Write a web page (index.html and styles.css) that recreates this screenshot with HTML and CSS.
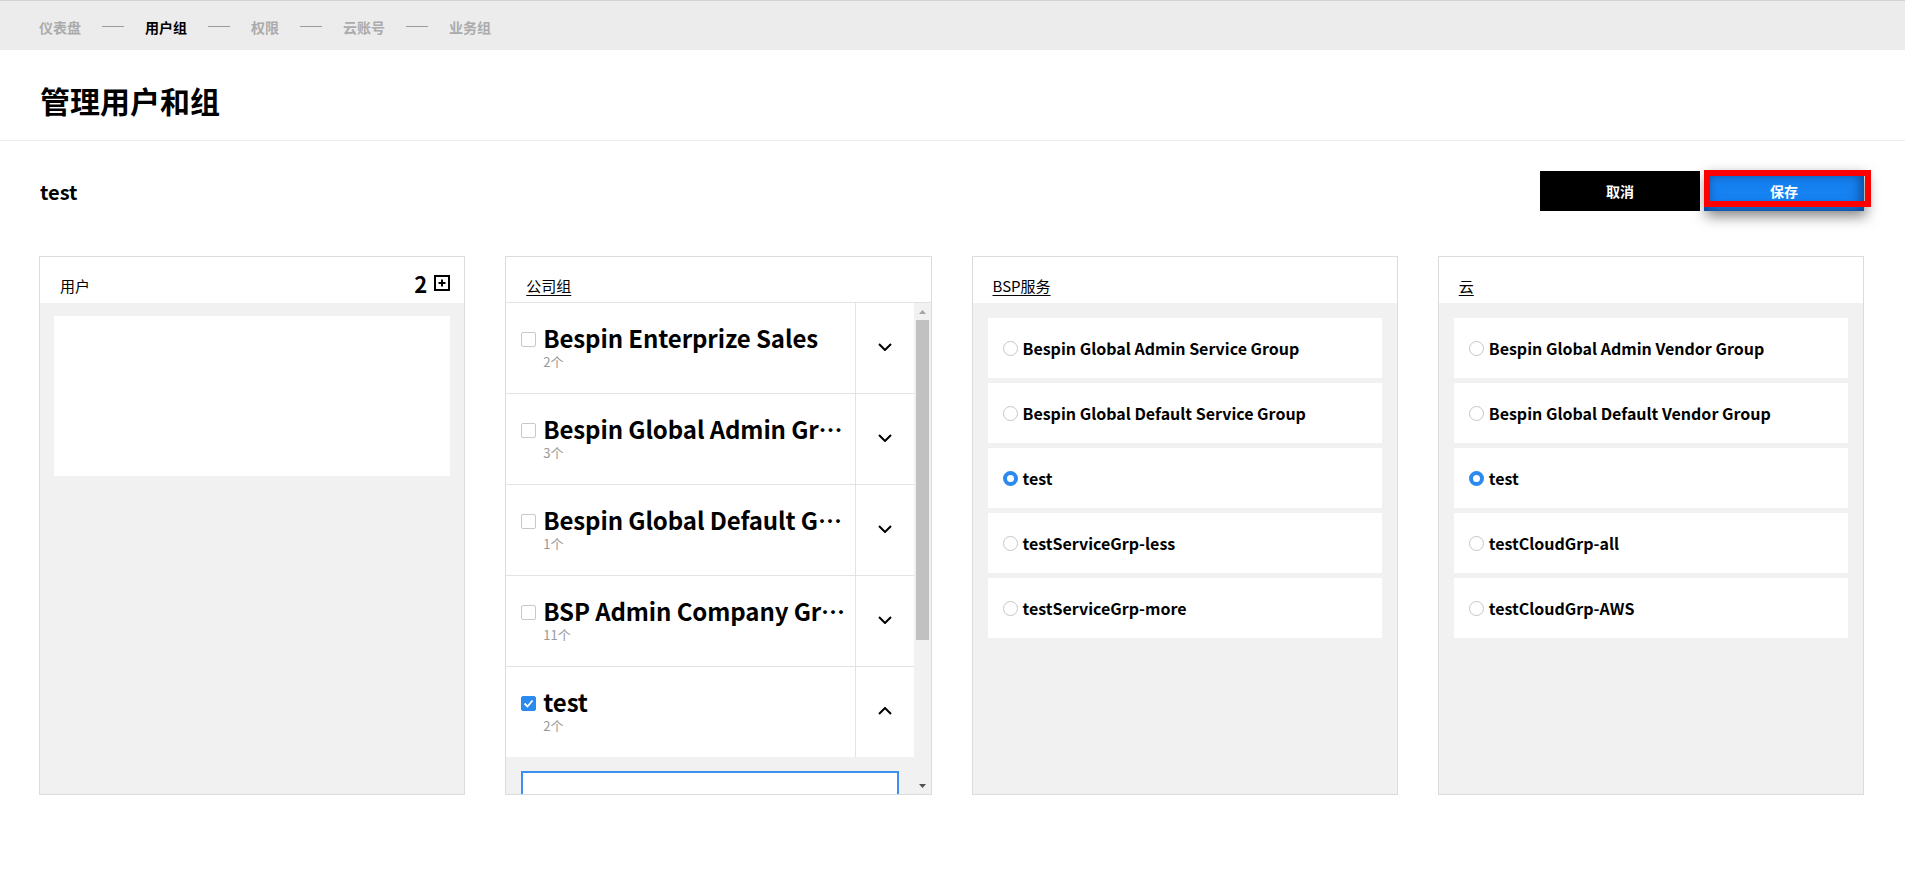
FILE: index.html
```html
<!DOCTYPE html>
<html lang="zh">
<head>
<meta charset="utf-8">
<title>管理用户和组</title>
<link rel="stylesheet" href="styles.css">
</head>
<body>
<nav class="crumbs">
  <span class="crumb">仪表盘</span><span class="sep"></span>
  <span class="crumb active">用户组</span><span class="sep"></span>
  <span class="crumb">权限</span><span class="sep"></span>
  <span class="crumb">云账号</span><span class="sep"></span>
  <span class="crumb">业务组</span>
</nav>
<header class="page-head"><h1>管理用户和组</h1></header>
<main class="main">
  <div class="toolbar">
    <h2 class="name">test</h2>
    <div class="actions">
      <button class="btn btn-cancel">取消</button>
      <div class="save-wrap">
        <button class="btn btn-save">保存</button>
        <span class="highlight"></span>
      </div>
    </div>
  </div>
  <div class="panels">
    <section class="panel">
      <div class="panel-head">
        <span class="head-title">用户</span>
        <span class="head-tools"><span class="count-big">2</span>
          <svg class="plus" width="16" height="16" viewBox="0 0 16 16"><rect x="1" y="1" width="14" height="14" fill="none" stroke="#000" stroke-width="2"/><path d="M8 4.5v7M4.5 8h7" stroke="#000" stroke-width="2"/></svg>
        </span>
      </div>
      <div class="panel-body pad">
        <div class="user-box"></div>
      </div>
    </section>

    <section class="panel">
      <div class="panel-head lined"><span class="head-title u">公司组</span></div>
      <div class="panel-body scroll-wrap">
        <div class="list">
          <div class="row">
            <div class="row-main">
              <div class="title-line"><span class="cb"></span><span class="gtitle">Bespin Enterprize Sales</span></div>
              <div class="gcount">2个</div>
            </div>
            <div class="row-toggle"><svg width="14" height="8" viewBox="0 0 14 8"><path d="M1 1l6 6 6-6" fill="none" stroke="#000" stroke-width="2"/></svg></div>
          </div>
          <div class="row">
            <div class="row-main">
              <div class="title-line"><span class="cb"></span><span class="gtitle">Bespin Global Admin Group</span></div>
              <div class="gcount">3个</div>
            </div>
            <div class="row-toggle"><svg width="14" height="8" viewBox="0 0 14 8"><path d="M1 1l6 6 6-6" fill="none" stroke="#000" stroke-width="2"/></svg></div>
          </div>
          <div class="row">
            <div class="row-main">
              <div class="title-line"><span class="cb"></span><span class="gtitle">Bespin Global Default Group</span></div>
              <div class="gcount">1个</div>
            </div>
            <div class="row-toggle"><svg width="14" height="8" viewBox="0 0 14 8"><path d="M1 1l6 6 6-6" fill="none" stroke="#000" stroke-width="2"/></svg></div>
          </div>
          <div class="row">
            <div class="row-main">
              <div class="title-line"><span class="cb"></span><span class="gtitle">BSP Admin Company Group</span></div>
              <div class="gcount">11个</div>
            </div>
            <div class="row-toggle"><svg width="14" height="8" viewBox="0 0 14 8"><path d="M1 1l6 6 6-6" fill="none" stroke="#000" stroke-width="2"/></svg></div>
          </div>
          <div class="row last">
            <div class="row-main">
              <div class="title-line"><span class="cb checked"><svg width="11" height="9" viewBox="0 0 11 9"><path d="M1.5 4.5l3 3 5-6" fill="none" stroke="#fff" stroke-width="1.8"/></svg></span><span class="gtitle">test</span></div>
              <div class="gcount">2个</div>
            </div>
            <div class="row-toggle"><svg width="14" height="8" viewBox="0 0 14 8"><path d="M1 7l6-6 6 6" fill="none" stroke="#000" stroke-width="2"/></svg></div>
          </div>
          <div class="expand">
            <div class="search-box"></div>
          </div>
        </div>
        <div class="sbar">
          <span class="sbtn"><svg width="7" height="4" viewBox="0 0 7 4"><path d="M0 4L3.5 0 7 4z" fill="#a3a3a3"/></svg></span>
          <span class="sthumb"></span>
          <span class="sfill"></span>
          <span class="sbtn"><svg width="7" height="4" viewBox="0 0 7 4"><path d="M0 0h7L3.5 4z" fill="#505050"/></svg></span>
        </div>
      </div>
    </section>

    <section class="panel">
      <div class="panel-head"><span class="head-title u">BSP服务</span></div>
      <div class="panel-body opts">
        <div class="opt"><span class="radio"></span>Bespin Global Admin Service Group</div>
        <div class="opt"><span class="radio"></span>Bespin Global Default Service Group</div>
        <div class="opt"><span class="radio on"></span>test</div>
        <div class="opt"><span class="radio"></span>testServiceGrp-less</div>
        <div class="opt"><span class="radio"></span>testServiceGrp-more</div>
      </div>
    </section>

    <section class="panel">
      <div class="panel-head"><span class="head-title u">云</span></div>
      <div class="panel-body opts">
        <div class="opt"><span class="radio"></span>Bespin Global Admin Vendor Group</div>
        <div class="opt"><span class="radio"></span>Bespin Global Default Vendor Group</div>
        <div class="opt"><span class="radio on"></span>test</div>
        <div class="opt"><span class="radio"></span>testCloudGrp-all</div>
        <div class="opt"><span class="radio"></span>testCloudGrp-AWS</div>
      </div>
    </section>
  </div>
</main>
</body>
</html>
```

FILE: styles.css
```css
* { box-sizing: border-box; }
html, body { margin: 0; padding: 0; background: #fff; }
body {
  font-family: "Noto Sans CJK SC", "Noto Sans", sans-serif;
  color: #000;
  width: 1905px;
  height: 896px;
  overflow: hidden;
}

.crumbs {
  height: 50px;
  background: #ececec;
  border-top: 1px solid #d2d2d2;
  display: flex;
  align-items: center;
  padding: 2px 0 0 39px;
  gap: 21px;
}
.crumb { font-size: 14px; font-weight: 700; color: #ababab; line-height: 20px; }
.crumb.active { color: #000; }
.sep { width: 22px; height: 1px; background: #9a9a9a; }

.page-head {
  height: 91px;
  padding: 10px 0 0 40px;
  display: flex;
  align-items: center;
  border-bottom: 1px solid #ebebeb;
}
.page-head h1 { margin: 0; font-size: 30px; font-weight: 700; line-height: 40px; }

.main { padding: 0 41px 0 39px; }

.toolbar {
  padding-top: 30px;
  height: 70px;
  display: flex;
  align-items: center;
  justify-content: space-between;
  margin-bottom: 45px;
}
.name { margin: 0 0 0 1px; font-size: 20px; font-weight: 700; line-height: 28px; padding-top: 2px; }
.actions { display: flex; gap: 4px; }
.btn {
  width: 160px;
  height: 40px;
  border: 0;
  font-family: inherit;
  font-size: 14px;
  font-weight: 700;
  color: #fff;
  padding: 0;
}
.btn-cancel { background: #000; }
.save-wrap { position: relative; }
.btn-save {
  display: block;
  background: #1682f2;
  box-shadow: inset 0 0 12px 3px rgba(12, 50, 110, 0.75), 2px 5px 14px rgba(0, 0, 0, 0.5);
}
.highlight {
  position: absolute;
  left: 0;
  top: -1px;
  width: 167px;
  height: 37px;
  border: 6px solid #ff0000;
  pointer-events: none;
}

.panels {
  display: grid;
  grid-template-columns: repeat(4, 1fr);
  column-gap: 40px;
}
.panel {
  height: 539px;
  border: 1px solid #dcdcdc;
  display: flex;
  flex-direction: column;
  overflow: hidden;
}
.panel-head {
  flex: none;
  height: 46px;
  display: flex;
  align-items: flex-start;
  justify-content: space-between;
  padding: 18px 14px 0 20px;
  background: #fff;
}
.panel-head.lined { border-bottom: 1px solid #e3e3e3; height: 46px; }
.head-title { font-size: 15px; line-height: 22px; }
.head-title.u { text-decoration: underline; text-underline-offset: 3px; }
.head-tools { display: flex; align-items: center; gap: 7px; margin-top: -4px; }
.count-big { font-size: 22px; font-weight: 700; line-height: 24px; }
.plus { display: block; }

.panel-body { flex: 1; min-height: 0; background: #f1f1f1; }
.pad { padding: 13px 14px; }
.user-box { height: 160px; background: #fff; }

.scroll-wrap { display: flex; }
.list { flex: 1; overflow: hidden; }
.row {
  height: 91px;
  display: flex;
  background: #fff;
  border-bottom: 1px solid #e3e3e3;
}
.row.last { border-bottom: 0; height: 90px; }
.row-main {
  flex: 1;
  min-width: 0;
  padding: 19px 8px 0 15px;
  border-right: 1px solid #e3e3e3;
}
.title-line { display: flex; align-items: center; gap: 7px; height: 32px; }
.gtitle {
  font-size: 24px;
  font-weight: 700;
  line-height: 32px;
  letter-spacing: -0.1px;
  white-space: nowrap;
  overflow: hidden;
  text-overflow: ellipsis;
}
.cb {
  flex: none;
  width: 15px;
  height: 15px;
  border: 1px solid #c8c8c8;
  border-radius: 2px;
  background: #fff;
  display: flex;
  align-items: center;
  justify-content: center;
  margin-top: 2px;
}
.cb.checked { background: #2b8af0; border-color: #2b8af0; }
.gcount { padding-left: 22px; font-size: 13px; line-height: 16px; color: #999; }
.row-toggle {
  width: 58px;
  flex: none;
  display: flex;
  align-items: center;
  justify-content: center;
  padding-bottom: 2px;
}
.row-toggle svg { display: block; }
.expand { padding: 14px 15px; background: #f1f1f1; }
.search-box { height: 40px; border: 2px solid #3d8fee; background: #fff; }

.sbar {
  width: 17px;
  flex: none;
  display: flex;
  flex-direction: column;
  background: #f1f1f1;
}
.sbtn { height: 17px; display: flex; align-items: center; justify-content: center; flex: none; }
.sthumb { height: 320px; margin: 0 2px; background: #c1c1c1; flex: none; }
.sfill { flex: 1; }

.opts { padding: 15px 15px; display: flex; flex-direction: column; gap: 5px; }
.opt {
  height: 60px;
  background: #fff;
  display: flex;
  align-items: center;
  gap: 5px;
  padding: 0 15px 0;
  font-size: 16px;
  font-weight: 700;
}
.radio {
  width: 15px;
  height: 15px;
  border: 1px solid #c6c6c6;
  border-radius: 50%;
  background: #fff;
  flex: none;
  margin-top: 1px;
}
.radio.on { border: 4px solid #2b8af0; background: #fff; }
```
